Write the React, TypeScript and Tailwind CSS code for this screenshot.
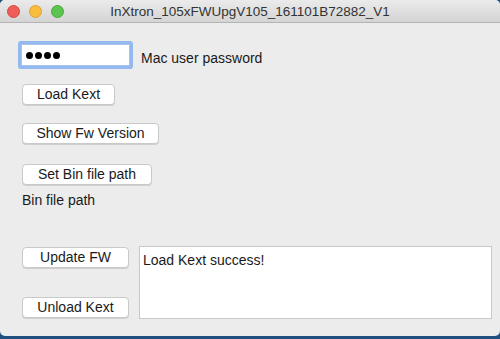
import React from "react";

const font = { fontFamily: '"Liberation Sans", Arial, sans-serif' };

function Btn({ w, children }: { w: string; children: React.ReactNode }) {
  return (
    <div
      className={`${w} h-[21px] flex items-center justify-center bg-white border border-[#c9c9c9] rounded-[4px] shadow-[0_1px_0_rgba(0,0,0,0.12)] text-[14px] text-[#1a1a1a]`}
    >
      {children}
    </div>
  );
}

export default function App() {
  return (
    <div className="w-[500px] h-[339px] bg-[#1f4f7e] overflow-hidden" style={font}>
      <div className="w-[500px] h-[336px] bg-[#ececec] rounded-[5px] overflow-hidden flex flex-col">
        <div className="h-[23px] shrink-0 grid grid-cols-[1fr_auto_1fr] items-center bg-gradient-to-b from-[#ebebeb] to-[#d4d4d4] border-b border-[#b4b4b4]">
          <div className="flex items-center gap-[9px] pl-[7px]">
            <div className="w-[13px] h-[13px] rounded-full bg-[#ee5d56] border border-[#d4483f]" />
            <div className="w-[13px] h-[13px] rounded-full bg-[#f8bd3c] border border-[#dea232]" />
            <div className="w-[13px] h-[13px] rounded-full bg-[#5dc451] border border-[#48a73c]" />
          </div>
          <div className="text-[13.5px] text-[#333] leading-none pt-[1px]">
            InXtron_105xFWUpgV105_161101B72882_V1
          </div>
          <div />
        </div>

        <div className="flex-1 flex flex-col pl-[21px] pr-[8px]">
          <div className="mt-[21px] flex items-center">
            <div className="w-[109px] h-[22px] bg-white border border-[#a9c4ea] rounded-[1px] shadow-[0_0_0_3px_#94b9ef] flex items-center pl-[4px] gap-[2px]">
              {[0, 1, 2, 3].map((i) => (
                <div key={i} className="w-[7px] h-[7px] rounded-full bg-black" />
              ))}
            </div>
            <div className="ml-[11px] translate-y-[3px] text-[14px] text-[#1a1a1a]">Mac user password</div>
          </div>

          <div className="mt-[18px] pl-[1px]">
            <Btn w="w-[93px]">Load Kext</Btn>
          </div>
          <div className="mt-[18px] pl-[1px]">
            <Btn w="w-[137px]">Show Fw Version</Btn>
          </div>
          <div className="mt-[20px] pl-[1px]">
            <Btn w="w-[130px]">Set Bin file path</Btn>
          </div>
          <div className="mt-[7px] pl-[1px] text-[14px] text-[#1a1a1a] leading-[16px]">Bin file path</div>

          <div className="mt-[39px] pl-[1px] flex gap-[10px]">
            <div className="flex flex-col justify-between h-[71px]">
              <Btn w="w-[107px]">Update FW</Btn>
              <Btn w="w-[107px]">Unload Kext</Btn>
            </div>
            <div className="w-[353px] h-[73px] -mt-[1px] bg-white border border-[#c8c8c8] px-[3px] pt-[3px] text-[14px] text-[#1a1a1a]">
              Load Kext success!
            </div>
          </div>
        </div>
      </div>
    </div>
  );
}
